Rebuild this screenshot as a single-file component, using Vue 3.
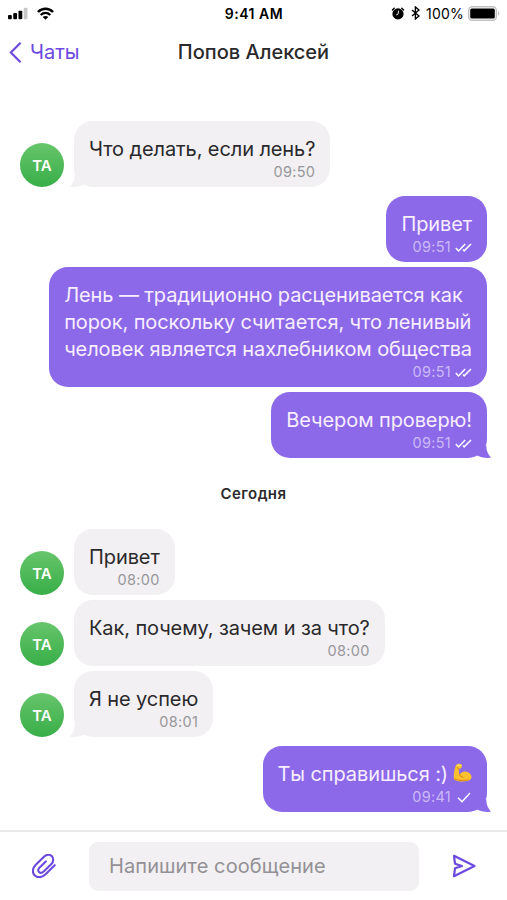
<template>
	<div class="screen">
		<header class="status-bar">
			<div class="status-side">
				<svg class="signal" viewBox="0 0 21 13">
					<rect x="0" y="8" width="4" height="4.5" rx="1" />
					<rect x="5.5" y="6" width="4" height="6.5" rx="1" />
					<rect x="11" y="3.5" width="4" height="9" rx="1" />
					<rect x="16.5" y="0.5" width="4" height="12" rx="1" opacity="0.22" />
				</svg>
				<svg class="wifi" viewBox="0 0 17 13" fill="none" stroke="currentColor">
					<path d="M1 5C5.3.5 11.7.5 16 5" stroke-width="2.5" />
					<path d="M3.7 8c2.9-2.7 6.7-2.7 9.6 0" stroke-width="2.3" />
					<path d="M8.5 12.7 5.7 10c1.6-1.5 4-1.5 5.6 0z" fill="currentColor" stroke="none" />
				</svg>
			</div>
			<span class="clock">9:41 AM</span>
			<div class="status-side right">
				<svg class="alarm" viewBox="0 0 14 13">
					<circle cx="7" cy="6.9" r="5.6" />
					<path d="M1.5 3 3.2 1.3M12.5 3 10.8 1.3" stroke="currentColor" stroke-width="1.5" stroke-linecap="round" />
					<path d="M7.6 3.6 7 7.2 5.2 7.9" fill="none" stroke="#fff" stroke-width="0.9" />
				</svg>
				<svg class="bluetooth" viewBox="0 0 9 14" fill="none" stroke="currentColor" stroke-width="1.4">
					<path d="M1 4l7 6-3.6 3V1L8 4l-7 6" />
				</svg>
				<span class="percent">100%</span>
				<svg class="battery" viewBox="0 0 32 15">
					<rect x="0.7" y="0.7" width="27.6" height="13.6" rx="3.5" fill="#fff" stroke="#c0c0c0" stroke-width="1.4" />
					<rect x="2.2" y="2.5" width="24.6" height="10" rx="1.5" />
					<path d="M30 5.3c1.7.5 1.7 3.9 0 4.4z" fill="#c0c0c0" />
				</svg>
			</div>
		</header>

		<nav class="nav-bar">
			<button class="back">
				<svg viewBox="0 0 14 24" fill="none" stroke="currentColor" stroke-width="2.3">
					<path d="M12.5 1.5 2 12l10.5 10.5" />
				</svg>
				<span>Чаты</span>
			</button>
			<h1>Попов Алексей</h1>
		</nav>

		<main class="chat">
			<template v-for="item in items" :key="item.id">
				<div v-if="item.day" class="day">{{ item.day }}</div>
				<div v-else class="row" :class="{ own: item.own, spaced: item.spaced }">
					<div v-if="!item.own" class="avatar">ТА</div>
					<div class="bubble">
						<p v-for="line in item.lines" :key="line" class="line">
							<span>{{ line }}</span>
							<svg v-if="item.emoji" class="biceps" viewBox="0 0 20 20">
								<path d="M3.5 1.8C5 .4 8 .3 9 1.7c.9 1.3.4 3.3-.8 4-.8.5-1.5.2-2 .3-.2 2.4.1 4.6.7 6.4 1.2-2.4 3.4-3.8 6-3.5 3.3.3 6 2.3 6.5 5 .4 2.5-.9 4-3.4 4.7-4.5 1.2-9.7 1-13.7-.5C.5 17.4.6 14.5 1 11c.4-3.300 1-6.800 2.500-9.200z" fill="#fbc02d" />
								<path d="M6.9 12.3c.8 1.5 2 2.3 3.7 2.6M5.8 6C4.9 5.800 4.600 5 4.800 4.200M2 16.800c4 1.700 9.500 2 14 .8" fill="none" stroke="#e28a16" stroke-width="1.1" stroke-linecap="round" />
								<path d="M4.5 3.2c.8-.9 2.500-1.100 3.500-.7" fill="none" stroke="#ffdf72" stroke-width="1.2" stroke-linecap="round" />
							</svg>
						</p>
						<div class="meta">
							<span>{{ item.time }}</span>
							<svg v-if="item.status === 'read'" class="read" viewBox="0 0 17 9">
								<path d="M.8 5 3.500 7.900 10.200 1M8 6.600 9.200 7.900 16 1" />
							</svg>
							<svg v-if="item.status === 'sent'" class="sent" viewBox="0 0 14 11">
								<path d="M1 5.7 5 9.7 13 1" />
							</svg>
						</div>
						<svg v-if="item.tail" class="tail" viewBox="0 0 16 13">
							<path d="M11.5 0C10.8 5 13 9.5 16 12.8 10 13.2 5 12.3 1.5 10z" />
						</svg>
					</div>
				</div>
			</template>
		</main>

		<footer class="composer">
			<button class="icon-button attach">
				<svg viewBox="0 0 24 24" fill="none" stroke="currentColor" stroke-width="2.1" stroke-linecap="round" stroke-linejoin="round">
					<path d="M22.7 11.2 13.3 20.4C9.9 23.7 5.3 24 2.6 21.3S.5 14 3.8 10.7L11.7 3C14.3.4 17.7.1 19.7 2.1S21.8 7.6 19.4 10l-7.7 7.5c-1.6 1.5-3.5 1.7-4.7.5s-1-3.1.6-4.6l6.2-6" />
				</svg>
			</button>
			<input v-model="draft" type="text" placeholder="Напишите сообщение" />
			<button class="icon-button send">
				<svg viewBox="0 0 24 24" fill="none" stroke="currentColor" stroke-width="2.2" stroke-linejoin="round">
					<path d="M2 1.8 22.5 12 2 22.2 3 14.3 10 12 3 9.7z" />
				</svg>
			</button>
		</footer>
	</div>
</template>

<script setup>
import { ref } from "vue"

const draft = ref("")

const items = ref([
	{ id: 1, lines: ["Что делать, если лень?"], time: "09:50", tail: true },
	{ id: 2, own: true, spaced: true, lines: ["Привет"], time: "09:51", status: "read" },
	{
		id: 3,
		own: true,
		lines: [
			"Лень — традиционно расценивается как",
			"порок, поскольку считается, что ленивый",
			"человек является нахлебником общества"
		],
		time: "09:51",
		status: "read"
	},
	{ id: 4, own: true, lines: ["Вечером проверю!"], time: "09:51", status: "read", tail: true },
	{ id: 5, day: "Сегодня" },
	{ id: 6, lines: ["Привет"], time: "08:00" },
	{ id: 7, lines: ["Как, почему, зачем и за что?"], time: "08:00" },
	{ id: 8, lines: ["Я не успею"], time: "08:01", tail: true },
	{ id: 9, own: true, spaced: true, lines: ["Ты справишься :)"], emoji: true, time: "09:41", status: "sent", tail: true }
])
</script>

<style>
body {
	margin: 0;
	background: #fff;
}
</style>

<style scoped>
.screen {
	display: flex;
	flex-direction: column;
	width: 507px;
	height: 900px;
	overflow: hidden;
	background: #fff;
	color: #2a292c;
	font-family: Inter, "Liberation Sans", sans-serif;
}

svg {
	display: block;
	flex-shrink: 0;
}

button {
	padding: 0;
	border: none;
	background: none;
	font: inherit;
	color: #6c49df;
}

.status-bar {
	display: grid;
	grid-template-columns: 1fr auto 1fr;
	align-items: center;
	height: 26px;
	padding: 0 7px 0 8px;
	color: #000;
}

.status-side {
	display: flex;
	align-items: center;
}

.status-side.right {
	justify-content: flex-end;
}

.signal {
	width: 20px;
	height: 13px;
}

.wifi {
	width: 17px;
	height: 13px;
	margin-left: 9px;
}

.clock {
	font-size: 14px;
	font-weight: 600;
	letter-spacing: 0.5px;
}

.alarm {
	width: 14px;
	height: 13px;
	margin-right: 6px;
}

.bluetooth {
	width: 9px;
	height: 14px;
	margin-right: 6px;
}

.percent {
	font-size: 14px;
	letter-spacing: 0.2px;
	margin-right: 4px;
}

.battery {
	width: 32px;
	height: 15px;
}

.nav-bar {
	display: grid;
	grid-template-columns: 1fr auto 1fr;
	align-items: center;
	height: 52px;
	padding: 0 9px;
}

.back {
	display: flex;
	align-items: center;
	gap: 8px;
	font-size: 20px;
	justify-self: start;
}

.back svg {
	width: 13px;
	height: 23px;
}

.nav-bar h1 {
	margin: 0;
	font-size: 20px;
	font-weight: 500;
}

.chat {
	flex: 1;
	display: flex;
	flex-direction: column;
	gap: 5px;
	padding: 43px 20px 0;
}

.row {
	display: flex;
	align-items: flex-end;
	gap: 10px;
}

.row.own {
	justify-content: flex-end;
}

.row.spaced {
	margin-top: 4px;
}

.avatar {
	display: flex;
	align-items: center;
	justify-content: center;
	width: 44px;
	height: 44px;
	border-radius: 50%;
	background: linear-gradient(#67c56b, #38ae48);
	color: #fff;
	font-size: 15px;
	font-weight: 600;
}

.bubble {
	position: relative;
	padding: 15px 15px 6px;
	border-radius: 19px;
	background: #f2f0f2;
}

.own .bubble {
	background: #8b69e9;
	color: #f8eeff;
}

.line {
	display: flex;
	align-items: center;
	gap: 6px;
	margin: 0;
	font-size: 20px;
	line-height: 27px;
	letter-spacing: -0.1px;
	white-space: nowrap;
}

.biceps {
	width: 19px;
	height: 19px;
	margin: -5px 0 0 -1px;
}

.meta {
	display: flex;
	align-items: center;
	justify-content: flex-end;
	gap: 4px;
	font-size: 14.5px;
	line-height: 18px;
	letter-spacing: 0.3px;
	color: #98979b;
}

.own .meta {
	color: #cbb9f7;
}

.meta svg {
	fill: none;
	stroke: #fff;
	stroke-width: 1.5;
}

.read {
	width: 17px;
	height: 9px;
}

.sent {
	width: 14px;
	height: 11px;
	margin: 0 1px 0 2px;
}

.tail {
	position: absolute;
	right: -4px;
	bottom: 0;
	width: 16px;
	height: 13px;
	fill: #8b69e9;
}

.row:not(.own) .tail {
	right: auto;
	left: -4px;
	transform: scaleX(-1);
	fill: #f2f0f2;
}

.day {
	margin: 21px 0 20px;
	font-size: 15px;
	font-weight: 600;
	line-height: 20px;
	letter-spacing: 0.4px;
	text-align: center;
}

.composer {
	display: flex;
	align-items: center;
	justify-content: space-between;
	height: 68px;
	padding: 0 31px 0 32px;
	border-top: 2px solid #e9e8ea;
}

.composer input {
	box-sizing: border-box;
	width: 330px;
	height: 49px;
	padding: 0 20px;
	border: none;
	border-radius: 9px;
	background: #f2f0f2;
	font: inherit;
	font-size: 20px;
	letter-spacing: 0.1px;
}

.composer input::placeholder {
	color: #929195;
	opacity: 1;
}

.icon-button svg {
	width: 24px;
	height: 24px;
}
</style>
